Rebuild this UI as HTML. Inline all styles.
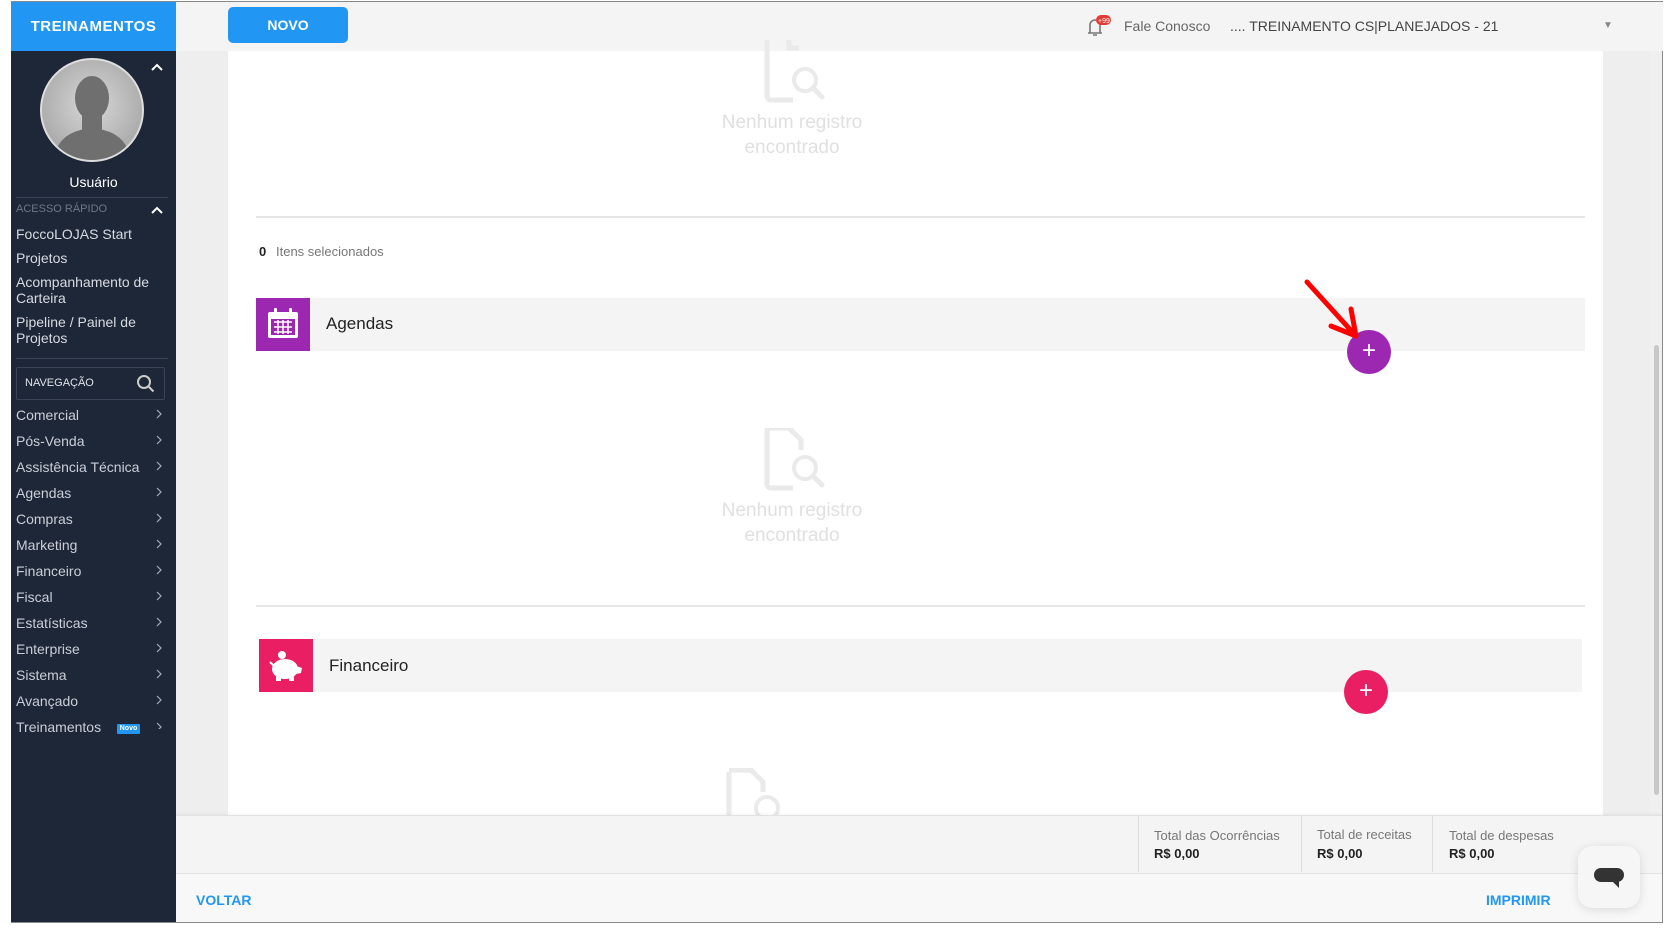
<!DOCTYPE html>
<html><head><meta charset="utf-8"><style>
*{margin:0;padding:0;box-sizing:border-box}
body{width:1664px;height:931px;position:relative;background:#fff;font-family:"Liberation Sans",sans-serif;overflow:hidden}
.a{position:absolute}
.side{left:11px;top:2px;width:165px;height:920px;background:#1e2738}
.hdr{left:11px;top:2px;width:165px;height:49px;background:#2196f3;color:#fff;font-weight:bold;font-size:15px;text-align:center;line-height:49px;letter-spacing:.5px}
.sl{color:#d7dbe2;font-size:14px;left:16px}
.mi{color:#c9ced7;font-size:14px;left:16px}
.chev{left:156px;width:8px;height:10px}
.empty{color:#e0e0e0;font-size:19px;text-align:center;width:240px;line-height:25px}
</style></head><body>
<div class="a" style="left:11px;top:1px;width:1652px;height:922px;border:1px solid #888"></div>
<div class="a side"></div>
<div class="a hdr">TREINAMENTOS</div>
<div class="a" style="left:176px;top:2px;width:1487px;height:49px;background:#f4f4f4"></div>
<div class="a" style="left:228px;top:7px;width:120px;height:36px;background:#2196f3;border-radius:5px;color:#fff;font-weight:bold;font-size:14px;text-align:center;line-height:36px">NOVO</div>
<svg class="a" style="left:1083px;top:14px" width="34" height="24"><path d="M5 19h14M7 19v-8a5 5 0 0 1 10 0v8M10 21h4" stroke="#777" stroke-width="1.6" fill="none"/><rect x="13" y="1" width="15" height="10" rx="5" fill="#e53935"/><text x="15" y="9" font-size="7" fill="#fff" font-family="Liberation Sans">+99</text></svg>
<div class="a" style="left:1124px;top:18px;font-size:14px;color:#666">Fale Conosco</div>
<div class="a" style="left:1230px;top:18px;font-size:14px;color:#444">.... TREINAMENTO CS|PLANEJADOS - 21</div>
<div class="a" style="left:1603px;top:20px;font-size:10px;color:#888">▼</div>
<div class="a" style="left:176px;top:51px;width:1474px;height:765px;background:#eeeeee"></div>
<div class="a" style="left:228px;top:51px;width:1375px;height:765px;background:#fff"></div>
<div class="a" style="left:1650px;top:51px;width:12px;height:765px;background:#f0f0f0"></div>
<div class="a" style="left:1654px;top:345px;width:5px;height:450px;background:#c8c8c8;border-radius:3px"></div>
<div class="a" style="left:40px;top:58px;width:104px;height:104px;border-radius:50%;border:2px solid #ddd;background:radial-gradient(circle at 50% 45%,#d8d8d8,#9a9a9a);overflow:hidden">
<svg width="100" height="100"><ellipse cx="50" cy="38" rx="17" ry="22" fill="#6f6f6f"/><path d="M12 100 C14 78 30 70 50 68 C70 70 86 78 88 100Z" fill="#6f6f6f"/><rect x="40" y="52" width="20" height="20" fill="#6f6f6f"/></svg></div>
<svg class="a" style="left:150px;top:62px" width="14" height="10"><path d="M2 8l5-5 5 5" stroke="#fff" stroke-width="2" fill="none"/></svg>
<div class="a" style="left:11px;top:174px;width:165px;text-align:center;color:#fff;font-size:14px">Usuário</div>
<div class="a" style="left:16px;top:197px;width:152px;height:1px;background:#3a4456"></div>
<div class="a" style="left:16px;top:203px;color:#6e7687;font-size:11px">ACESSO RÁPIDO</div>
<svg class="a" style="left:150px;top:205px" width="14" height="10"><path d="M2 8l5-5 5 5" stroke="#fff" stroke-width="2" fill="none"/></svg>
<div class="a sl" style="top:226px">FoccoLOJAS Start</div>
<div class="a sl" style="top:250px">Projetos</div>
<div class="a sl" style="top:274px;line-height:16px">Acompanhamento de<br>Carteira</div>
<div class="a sl" style="top:314px;line-height:16px">Pipeline / Painel de<br>Projetos</div>
<div class="a" style="left:16px;top:358px;width:152px;height:1px;background:#3a4456"></div>
<div class="a" style="left:16px;top:367px;width:149px;height:33px;border:1px solid #3a4456;border-radius:2px"></div>
<div class="a" style="left:25px;top:377px;color:#dfe3ea;font-size:11px">NAVEGAÇÃO</div>
<svg class="a" style="left:136px;top:374px" width="20" height="20"><circle cx="8" cy="8" r="6" stroke="#ccc" stroke-width="2" fill="none"/><path d="M12.5 12.5l5 5" stroke="#ccc" stroke-width="2"/></svg>
<div class="a mi" style="top:407px">Comercial</div>
<div class="a mi" style="top:433px">Pós-Venda</div>
<div class="a mi" style="top:459px">Assistência Técnica</div>
<div class="a mi" style="top:485px">Agendas</div>
<div class="a mi" style="top:511px">Compras</div>
<div class="a mi" style="top:537px">Marketing</div>
<div class="a mi" style="top:563px">Financeiro</div>
<div class="a mi" style="top:589px">Fiscal</div>
<div class="a mi" style="top:615px">Estatísticas</div>
<div class="a mi" style="top:641px">Enterprise</div>
<div class="a mi" style="top:667px">Sistema</div>
<div class="a mi" style="top:693px">Avançado</div>
<div class="a mi" style="top:719px">Treinamentos</div><div class="a" style="left:117px;top:724px;width:23px;height:10px;background:#2196f3;color:#fff;font-size:7px;font-weight:bold;text-align:center;line-height:10px;border-radius:1px">Novo</div>
<svg class="a" style="left:155px;top:409px" width="10" height="320" fill="none" stroke="#aab" stroke-width="1.2">
<path d="M2 1l4 4-4 4"/><path d="M2 27l4 4-4 4"/><path d="M2 53l4 4-4 4"/><path d="M2 79l4 4-4 4"/><path d="M2 105l4 4-4 4"/><path d="M2 131l4 4-4 4"/><path d="M2 157l4 4-4 4"/><path d="M2 183l4 4-4 4"/><path d="M2 209l4 4-4 4"/><path d="M2 235l4 4-4 4"/><path d="M2 261l4 4-4 4"/><path d="M2 287l4 4-4 4"/><path d="M2 314l4 4-4 4"/></svg>
<svg class="a" style="left:762px;top:40px" width="66" height="64"><path d="M5 0v56a4 4 0 0 0 4 4h22" stroke="#eaeaea" stroke-width="5" fill="none"/><path d="M27 0v8h10" stroke="#eaeaea" stroke-width="5" fill="none"/><circle cx="43" cy="40" r="11" stroke="#eaeaea" stroke-width="4" fill="none"/><path d="M51 48l9 9" stroke="#eaeaea" stroke-width="5" stroke-linecap="round"/></svg>
<div class="a empty" style="left:672px;top:110px">Nenhum registro<br>encontrado</div>
<div class="a" style="left:256px;top:216px;width:1329px;height:2px;background:#e6e6e6"></div>
<div class="a" style="left:259px;top:244px;font-size:13px;color:#222;font-weight:bold">0</div>
<div class="a" style="left:276px;top:244px;font-size:13px;color:#777">Itens selecionados</div>
<div class="a" style="left:256px;top:298px;width:1329px;height:53px;background:#f4f4f4"></div>
<div class="a" style="left:256px;top:298px;width:54px;height:53px;background:#9c27b0"></div>
<svg class="a" style="left:266px;top:307px" width="34" height="34"><rect x="2" y="5" width="30" height="26" rx="2" fill="#fff"/><rect x="5" y="12" width="24" height="16" fill="#9c27b0"/><path d="M8 15h18M8 20h18M8 25h18M12 13v14M17 13v14M22 13v14" stroke="#fff" stroke-width="1.5"/><rect x="8" y="1" width="3" height="7" rx="1" fill="#fff"/><rect x="23" y="1" width="3" height="7" rx="1" fill="#fff"/></svg>
<div class="a" style="left:326px;top:314px;font-size:17px;color:#222">Agendas</div>
<div class="a" style="left:1347px;top:330px;width:44px;height:44px;border-radius:50%;background:#9c27b0;color:#fff;font-size:24px;text-align:center;line-height:42px">+</div>
<svg class="a" style="left:1295px;top:275px" width="80" height="75"><path d="M12 7L61 61M61 61L56 34M61 61L36 51" stroke="#f00" stroke-width="5" stroke-linecap="round" fill="none"/></svg>
<svg class="a" style="left:762px;top:428px" width="66" height="64"><path d="M5 0v56a4 4 0 0 0 4 4h22M5 0h22l12 12v10" stroke="#eaeaea" stroke-width="5" fill="none"/><circle cx="43" cy="40" r="11" stroke="#eaeaea" stroke-width="4" fill="none"/><path d="M51 48l9 9" stroke="#eaeaea" stroke-width="5" stroke-linecap="round"/></svg>
<div class="a empty" style="left:672px;top:498px">Nenhum registro<br>encontrado</div>
<div class="a" style="left:256px;top:605px;width:1329px;height:2px;background:#e6e6e6"></div>
<div class="a" style="left:259px;top:639px;width:1323px;height:53px;background:#f4f4f4"></div>
<div class="a" style="left:259px;top:639px;width:54px;height:53px;background:#e91e63"></div>
<svg class="a" style="left:268px;top:648px" width="36" height="36"><ellipse cx="17" cy="21" rx="13" ry="10" fill="#fff"/><circle cx="14" cy="7" r="4" fill="#fff"/><rect x="8" y="26" width="5" height="7" fill="#fff"/><rect x="21" y="26" width="5" height="7" fill="#fff"/><path d="M28 18l6 2-1 5-5 1z" fill="#fff"/><path d="M2 14l4 4" stroke="#fff" stroke-width="2"/></svg>
<div class="a" style="left:329px;top:656px;font-size:17px;color:#222">Financeiro</div>
<div class="a" style="left:1344px;top:670px;width:44px;height:44px;border-radius:50%;background:#e91e63;color:#fff;font-size:24px;text-align:center;line-height:42px">+</div>
<svg class="a" style="left:724px;top:768px" width="66" height="48"><path d="M5 48V4M5 2h22l12 12v10" stroke="#eaeaea" stroke-width="5" fill="none"/><circle cx="43" cy="40" r="11" stroke="#eaeaea" stroke-width="4" fill="none"/></svg>
<div class="a" style="left:176px;top:815px;width:1486px;height:58px;background:#f4f4f4;border-top:1px solid #e2e2e2;box-shadow:0 -1px 3px rgba(0,0,0,.05)"></div>
<div class="a" style="left:1138px;top:816px;width:1px;height:56px;background:#ddd"></div>
<div class="a" style="left:1301px;top:816px;width:1px;height:56px;background:#ddd"></div>
<div class="a" style="left:1432px;top:816px;width:1px;height:56px;background:#ddd"></div>
<div class="a" style="left:1154px;top:828px;font-size:13px;color:#777">Total das Ocorrências</div>
<div class="a" style="left:1154px;top:846px;font-size:13px;color:#222;font-weight:bold">R$ 0,00</div>
<div class="a" style="left:1317px;top:827px;font-size:13px;color:#777">Total de receitas</div>
<div class="a" style="left:1317px;top:846px;font-size:13px;color:#222;font-weight:bold">R$ 0,00</div>
<div class="a" style="left:1449px;top:828px;font-size:13px;color:#777">Total de despesas</div>
<div class="a" style="left:1449px;top:846px;font-size:13px;color:#222;font-weight:bold">R$ 0,00</div>
<div class="a" style="left:176px;top:873px;width:1486px;height:49px;background:#f8f8f8;border-top:1px solid #e4e4e4"></div>
<div class="a" style="left:196px;top:892px;font-size:14px;color:#2196f3;font-weight:bold">VOLTAR</div>
<div class="a" style="left:1486px;top:892px;font-size:14px;color:#2196f3;font-weight:bold">IMPRIMIR</div>
<div class="a" style="left:1578px;top:846px;width:62px;height:62px;border-radius:14px;background:#f6f6f6;box-shadow:0 2px 10px rgba(0,0,0,.12)"></div>
<svg class="a" style="left:1592px;top:866px" width="34" height="24"><rect x="2" y="2" width="30" height="14" rx="7" fill="#333"/><path d="M20 15l7 0 0 7z" fill="#333"/></svg>
</body></html>
